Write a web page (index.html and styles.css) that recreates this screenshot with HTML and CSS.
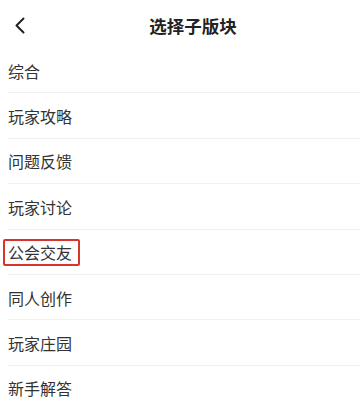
FILE: index.html
```html
<!DOCTYPE html>
<html lang="zh">
<head>
<meta charset="utf-8">
<link rel="stylesheet" href="styles.css">
</head>
<body>
<div class="page">
  <header class="header">
    <button class="back" aria-label="返回">
      <svg width="12" height="17" viewBox="0 0 12 17"><path d="M9.5 1.5 L2.5 8.5 L9.5 15.5" fill="none" stroke="#222" stroke-width="2" stroke-linecap="round" stroke-linejoin="round"/></svg>
    </button>
    <h1 class="title">选择子版块</h1>
  </header>
  <ul class="list">
    <li class="item">综合</li>
    <li class="item">玩家攻略</li>
    <li class="item">问题反馈</li>
    <li class="item">玩家讨论</li>
    <li class="item"><span class="marked">公会交友</span></li>
    <li class="item">同人创作</li>
    <li class="item">玩家庄园</li>
    <li class="item">新手解答</li>
  </ul>
</div>
</body>
</html>
```
FILE: styles.css
```css
html, body {
  margin: 0;
  padding: 0;
  background: #fff;
}
body {
  font-family: "Noto Sans CJK SC", "Noto Sans", sans-serif;
  color: #333;
}
.page {
  width: 360px;
  height: 409px;
  overflow: hidden;
}
.header {
  position: relative;
  height: 48px;
  display: flex;
  align-items: center;
  justify-content: center;
}
.back {
  position: absolute;
  left: 14px;
  top: 17px;
  padding: 0;
  border: 0;
  background: none;
  width: 12px;
  height: 17px;
  display: block;
}
.back svg { display: block; }
.title {
  margin: 0;
  font-size: 17.5px;
  font-weight: 700;
  color: #222;
  line-height: 1;
  margin-top: 3px;
  padding-left: 26px;
}
.list {
  list-style: none;
  margin: 0;
  padding: 0;
}
.item {
  margin-left: 8px;
  height: 44.4px;
  border-bottom: 1px solid #f1f1f1;
  display: flex;
  align-items: center;
  font-size: 16px;
  color: #333;
  padding-top: 1px;
  box-sizing: border-box;
  height: 45.4px;
}
.marked {
  display: inline-block;
  margin-left: -5px;
  padding: 0 5.5px 0 3px;
  border: 2px solid #d9342b;
  border-radius: 2px;
  line-height: 23px;
}
```
